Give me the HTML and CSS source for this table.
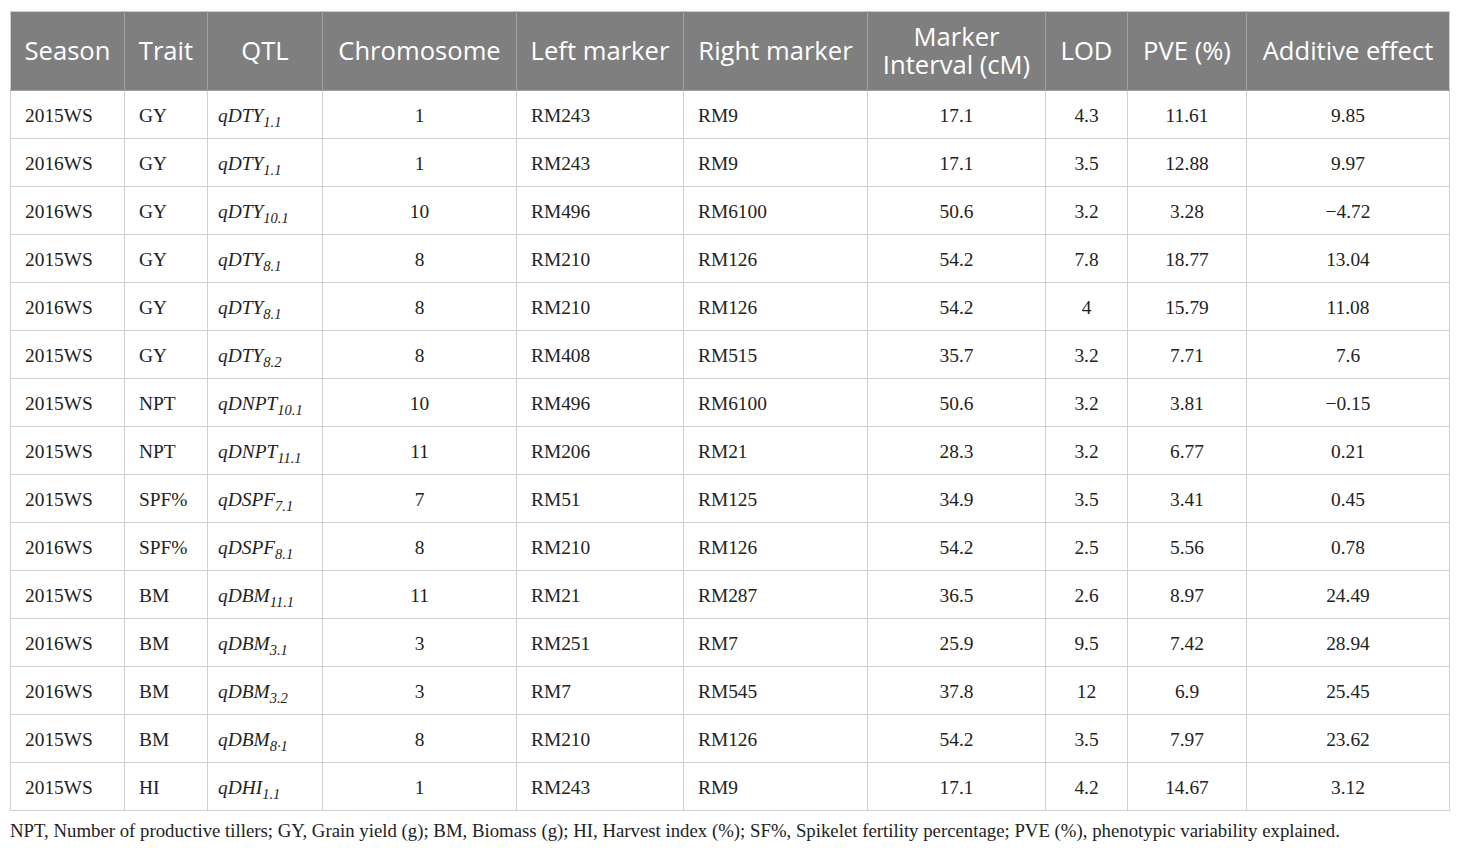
FILE: index.html
```html
<!DOCTYPE html>
<html>
<head>
<meta charset="utf-8">
<link rel="stylesheet" href="styles.css">
</head>
<body>
<div class="wrap">
<table class="qtl">
<colgroup>
<col class="c1"><col class="c2"><col class="c3"><col class="c4"><col class="c5"><col class="c6"><col class="c7"><col class="c8"><col class="c9"><col class="c10">
</colgroup>
<thead>
<tr>
<th>Season</th><th>Trait</th><th>QTL</th><th>Chromosome</th><th>Left marker</th><th>Right marker</th><th><span class="hl">Marker</span><span class="hl">Interval (cM)</span></th><th>LOD</th><th>PVE (%)</th><th>Additive effect</th>
</tr>
</thead>
<tbody>
<tr><td>2015WS</td><td>GY</td><td><i>qDTY<sub>1.1</sub></i></td><td class="ctr">1</td><td>RM243</td><td>RM9</td><td class="ctr">17.1</td><td class="ctr">4.3</td><td class="ctr">11.61</td><td class="ctr">9.85</td></tr>
<tr><td>2016WS</td><td>GY</td><td><i>qDTY<sub>1.1</sub></i></td><td class="ctr">1</td><td>RM243</td><td>RM9</td><td class="ctr">17.1</td><td class="ctr">3.5</td><td class="ctr">12.88</td><td class="ctr">9.97</td></tr>
<tr><td>2016WS</td><td>GY</td><td><i>qDTY<sub>10.1</sub></i></td><td class="ctr">10</td><td>RM496</td><td>RM6100</td><td class="ctr">50.6</td><td class="ctr">3.2</td><td class="ctr">3.28</td><td class="ctr">−4.72</td></tr>
<tr><td>2015WS</td><td>GY</td><td><i>qDTY<sub>8.1</sub></i></td><td class="ctr">8</td><td>RM210</td><td>RM126</td><td class="ctr">54.2</td><td class="ctr">7.8</td><td class="ctr">18.77</td><td class="ctr">13.04</td></tr>
<tr><td>2016WS</td><td>GY</td><td><i>qDTY<sub>8.1</sub></i></td><td class="ctr">8</td><td>RM210</td><td>RM126</td><td class="ctr">54.2</td><td class="ctr">4</td><td class="ctr">15.79</td><td class="ctr">11.08</td></tr>
<tr><td>2015WS</td><td>GY</td><td><i>qDTY<sub>8.2</sub></i></td><td class="ctr">8</td><td>RM408</td><td>RM515</td><td class="ctr">35.7</td><td class="ctr">3.2</td><td class="ctr">7.71</td><td class="ctr">7.6</td></tr>
<tr><td>2015WS</td><td>NPT</td><td><i>qDNPT<sub>10.1</sub></i></td><td class="ctr">10</td><td>RM496</td><td>RM6100</td><td class="ctr">50.6</td><td class="ctr">3.2</td><td class="ctr">3.81</td><td class="ctr">−0.15</td></tr>
<tr><td>2015WS</td><td>NPT</td><td><i>qDNPT<sub>11.1</sub></i></td><td class="ctr">11</td><td>RM206</td><td>RM21</td><td class="ctr">28.3</td><td class="ctr">3.2</td><td class="ctr">6.77</td><td class="ctr">0.21</td></tr>
<tr><td>2015WS</td><td>SPF%</td><td><i>qDSPF<sub>7.1</sub></i></td><td class="ctr">7</td><td>RM51</td><td>RM125</td><td class="ctr">34.9</td><td class="ctr">3.5</td><td class="ctr">3.41</td><td class="ctr">0.45</td></tr>
<tr><td>2016WS</td><td>SPF%</td><td><i>qDSPF<sub>8.1</sub></i></td><td class="ctr">8</td><td>RM210</td><td>RM126</td><td class="ctr">54.2</td><td class="ctr">2.5</td><td class="ctr">5.56</td><td class="ctr">0.78</td></tr>
<tr><td>2015WS</td><td>BM</td><td><i>qDBM<sub>11.1</sub></i></td><td class="ctr">11</td><td>RM21</td><td>RM287</td><td class="ctr">36.5</td><td class="ctr">2.6</td><td class="ctr">8.97</td><td class="ctr">24.49</td></tr>
<tr><td>2016WS</td><td>BM</td><td><i>qDBM<sub>3.1</sub></i></td><td class="ctr">3</td><td>RM251</td><td>RM7</td><td class="ctr">25.9</td><td class="ctr">9.5</td><td class="ctr">7.42</td><td class="ctr">28.94</td></tr>
<tr><td>2016WS</td><td>BM</td><td><i>qDBM<sub>3.2</sub></i></td><td class="ctr">3</td><td>RM7</td><td>RM545</td><td class="ctr">37.8</td><td class="ctr">12</td><td class="ctr">6.9</td><td class="ctr">25.45</td></tr>
<tr><td>2015WS</td><td>BM</td><td><i>qDBM<sub>8·1</sub></i></td><td class="ctr">8</td><td>RM210</td><td>RM126</td><td class="ctr">54.2</td><td class="ctr">3.5</td><td class="ctr">7.97</td><td class="ctr">23.62</td></tr>
<tr><td>2015WS</td><td>HI</td><td><i>qDHI<sub>1.1</sub></i></td><td class="ctr">1</td><td>RM243</td><td>RM9</td><td class="ctr">17.1</td><td class="ctr">4.2</td><td class="ctr">14.67</td><td class="ctr">3.12</td></tr>
</tbody>
</table>
<p class="note">NPT, Number of productive tillers; GY, Grain yield (g); BM, Biomass (g); HI, Harvest index (%); SF%, Spikelet fertility percentage; PVE (%), phenotypic variability explained.</p>
</div>
</body>
</html>
```

FILE: styles.css
```css
html, body {
  margin: 0;
  padding: 0;
  background: #ffffff;
}
.wrap {
  padding: 11px 10px 0 10px;
}
.qtl {
  border-collapse: collapse;
  table-layout: fixed;
  width: 1439px;
  font-family: "Liberation Serif", "Times New Roman", serif;
  color: #222222;
}
.c1 { width: 114px; }
.c2 { width: 83px; }
.c3 { width: 115px; }
.c4 { width: 194px; }
.c5 { width: 167px; }
.c6 { width: 184px; }
.c7 { width: 178px; }
.c8 { width: 82px; }
.c9 { width: 119px; }
.c10 { width: 203px; }
.qtl th {
  background: #7f7f7f;
  color: #ffffff;
  font-family: "Open Sans", "Noto Sans", sans-serif;
  font-weight: 400;
  font-size: 25.6px;
  line-height: 28px;
  height: 79px;
  padding: 0 2px;
  text-align: center;
  vertical-align: middle;
  border: 1px solid #a2a2a2;
  border-top-color: #cfcfcf;
  box-sizing: border-box;
  white-space: nowrap;
}
.qtl th .hl {
  display: block;
  line-height: 28px;
  height: 28px;
  overflow: visible;
}
.qtl th:first-child { border-left-color: #cfcfcf; }
.qtl th:last-child { border-right-color: #cfcfcf; }
.qtl td {
  height: 48px;
  box-sizing: border-box;
  padding: 2px 14px 0 14px;
  font-size: 19.4px;
  text-align: left;
  vertical-align: middle;
  border: 1px solid #d0d0d0;
  white-space: nowrap;
}
.qtl td.ctr {
  text-align: center;
  padding: 2px 4px 0 4px;
}
.qtl td:nth-child(3) { padding-left: 10px; }
.qtl sub {
  font-size: 14.5px;
  vertical-align: -5px;
  line-height: 0;
}
.note {
  margin: 9px 0 0 0;
  font-family: "Liberation Serif", "Times New Roman", serif;
  font-size: 18.8px;
  color: #222222;
}
```
